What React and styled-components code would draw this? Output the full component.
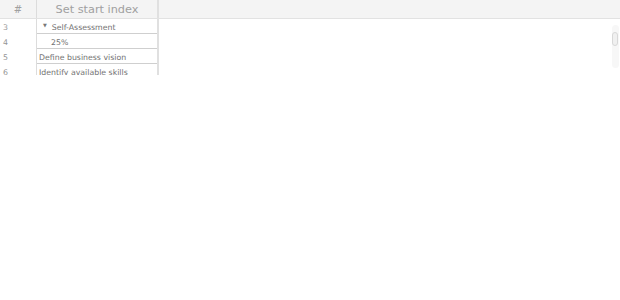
import React from "react";
import styled, { createGlobalStyle } from "styled-components";

const GlobalStyle = createGlobalStyle`
  html, body {
    margin: 0;
    padding: 0;
    background: #ffffff;
  }
  body {
    font-family: "DejaVu Sans", sans-serif;
  }
`;

const rows = [
  { id: 3, label: "Self-Assessment", kind: "group" },
  { id: 4, label: "25%", kind: "value" },
  { id: 5, label: "Define business vision" },
  { id: 6, label: "Identify available skills" },
];

const Sheet = () => {
  return (
    <>
      <GlobalStyle />
      <Frame>
        <HeaderRow>
          <IndexHead>#</IndexHead>
          <TitleHead>Set start index</TitleHead>
          <Filler />
        </HeaderRow>
        <Body>
          <Columns>
            <IndexCol>
              {rows.map((r) => (
                <IndexCell key={r.id}>{r.id}</IndexCell>
              ))}
            </IndexCol>
            <TaskCol>
              {rows.map((r) => (
                <TaskCell key={r.id} $indent={r.kind === "value" ? 12 : r.kind === "group" ? 4 : 0}>
                  {r.kind === "group" && <Caret>▼</Caret>}
                  {r.label}
                </TaskCell>
              ))}
            </TaskCol>
          </Columns>
          <ScrollTrack>
            <ScrollThumb />
          </ScrollTrack>
        </Body>
      </Frame>
    </>
  );
};

const Frame = styled.div`
  width: 620px;
  height: 75px;
  overflow: hidden;
  position: relative;
`;

const HeaderRow = styled.div`
  display: flex;
  height: 18px;
  background: #f4f4f4;
  border-bottom: 1px solid #e2e2e2;
`;

const IndexHead = styled.div`
  width: 36px;
  border-right: 1px solid #dcdcdc;
  display: flex;
  align-items: center;
  justify-content: center;
  font-size: 10px;
  color: #a0a0a0;
  padding-top: 1px;
`;

const TitleHead = styled.div`
  width: 120px;
  border-right: 2px solid #e0e0e0;
  display: flex;
  align-items: center;
  justify-content: center;
  font-size: 11.3px;
  color: #a0a0a0;
  padding-top: 1px;
`;

const Filler = styled.div`
  flex: 1;
`;

const Body = styled.div`
  position: relative;
  height: 56px;
`;

const Columns = styled.div`
  display: flex;
`;

const IndexCol = styled.div`
  width: 36px;
  border-right: 1px solid #dcdcdc;
`;

const IndexCell = styled.div`
  height: 15px;
  display: flex;
  align-items: center;
  padding: 2px 0 0 3px;
  box-sizing: border-box;
  font-size: 7.8px;
  color: #959595;
`;

const TaskCol = styled.div`
  width: 120px;
  border-right: 2px solid #e0e0e0;
`;

const TaskCell = styled.div`
  height: 15px;
  box-sizing: border-box;
  border-bottom: 1px solid #cfcfcf;
  display: flex;
  align-items: center;
  padding: 2px 0 0 ${(p) => 2 + p.$indent}px;
  font-size: 7.8px;
  color: #727272;
  white-space: nowrap;
`;

const Caret = styled.span`
  font-size: 5px;
  color: #777;
  margin-right: 5px;
  align-self: flex-start;
  margin-top: 1px;
`;

const ScrollTrack = styled.div`
  position: absolute;
  right: 1px;
  top: 6px;
  width: 7px;
  height: 43px;
  border-radius: 4px;
  background: #f7f7f7;
`;

const ScrollThumb = styled.div`
  margin-top: 7px;
  width: 6px;
  height: 14px;
  border-radius: 4px;
  background: #f0f0f0;
  border: 1px solid #d8d8d8;
  box-sizing: border-box;
`;

export default Sheet;
